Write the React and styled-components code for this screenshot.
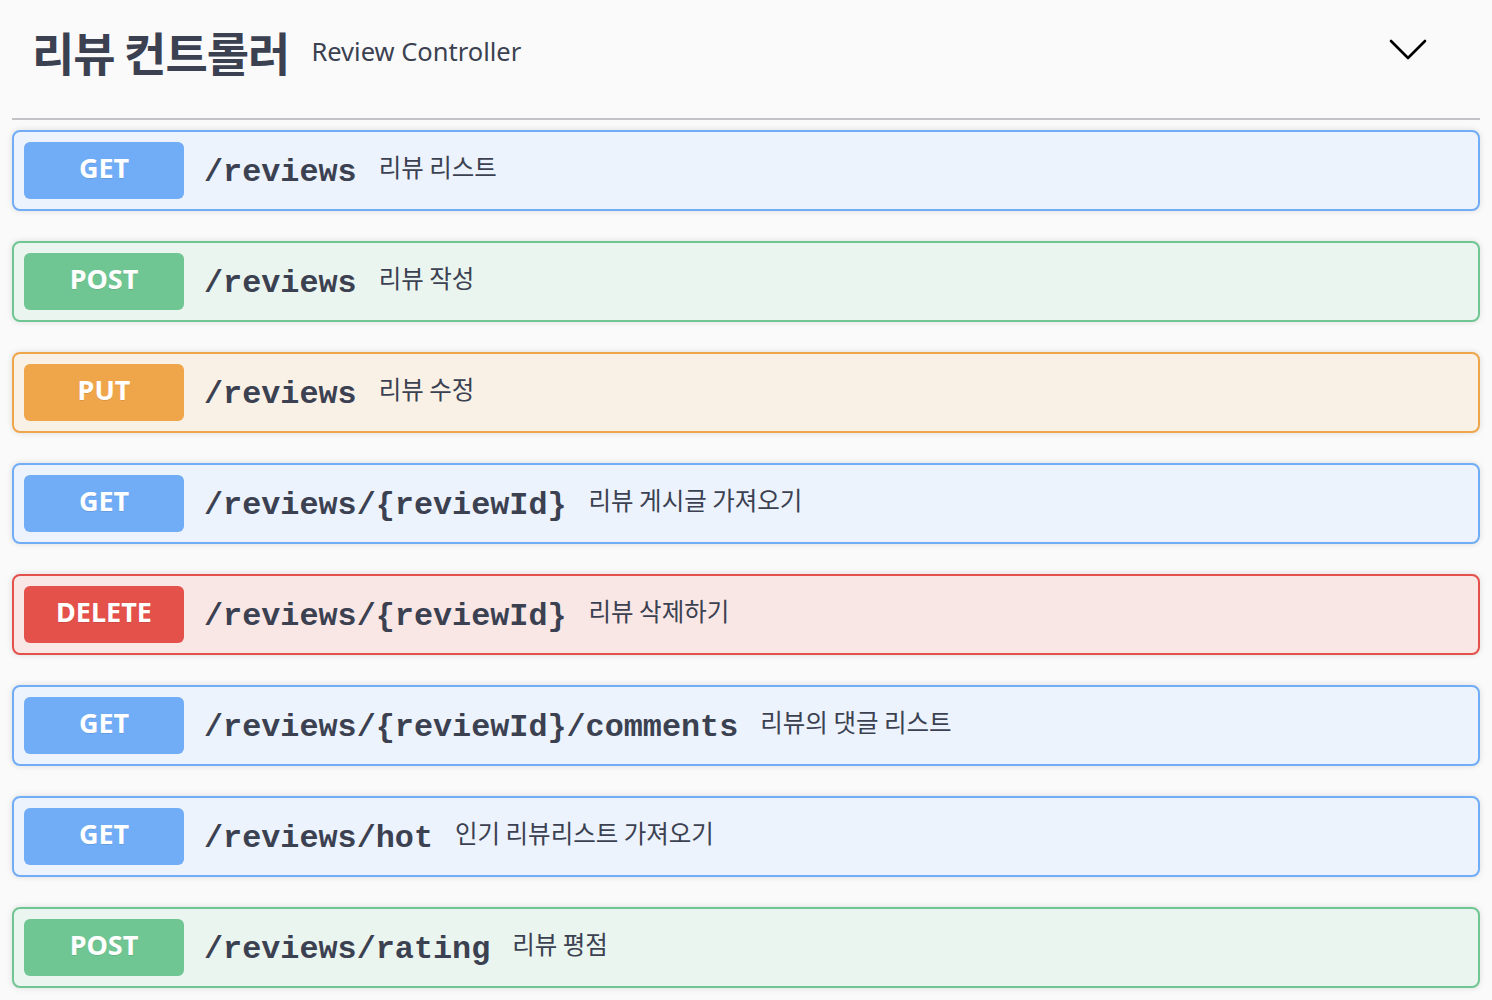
import React from 'react'
import styled, { createGlobalStyle } from 'styled-components'

const METHODS = {
    GET: { main: '#70adf6', bg: '#ecf3fc' },
    POST: { main: '#6fc692', bg: '#ebf5ef' },
    PUT: { main: '#efa54a', bg: '#faf1e6' },
    DELETE: { main: '#e4504a', bg: '#f9e7e6' },
}

const ROUTES = [
    { method: 'GET', path: '/reviews', desc: '리뷰 리스트' },
    { method: 'POST', path: '/reviews', desc: '리뷰 작성' },
    { method: 'PUT', path: '/reviews', desc: '리뷰 수정' },
    { method: 'GET', path: '/reviews/{reviewId}', desc: '리뷰 게시글 가져오기' },
    { method: 'DELETE', path: '/reviews/{reviewId}', desc: '리뷰 삭제하기' },
    { method: 'GET', path: '/reviews/{reviewId}/comments', desc: '리뷰의 댓글 리스트' },
    { method: 'GET', path: '/reviews/hot', desc: '인기 리뷰리스트 가져오기' },
    { method: 'POST', path: '/reviews/rating', desc: '리뷰 평점' },
]

const Chevron = () => (
    <svg width="38" height="21" viewBox="0 0 38 21" fill="none">
        <polyline points="2,2 19,19 36,2" stroke="#000" strokeWidth="2.6" strokeLinecap="round" strokeLinejoin="round" />
    </svg>
)

const App = () => {
    return (
        <>
            <GlobalStyle />
            <Page>
                <TagHeader>
                    <Title>리뷰 컨트롤러</Title>
                    <Subtitle>Review Controller</Subtitle>
                    <ExpandButton aria-label="collapse">
                        <Chevron />
                    </ExpandButton>
                </TagHeader>
                {ROUTES.map((r, i) => (
                    <Operation key={i} $method={r.method}>
                        <Badge $method={r.method}>{r.method}</Badge>
                        <Path>{r.path}</Path>
                        <Desc>{r.desc}</Desc>
                    </Operation>
                ))}
            </Page>
        </>
    )
}
export default App

const GlobalStyle = createGlobalStyle`
    html, body{
        margin:0;
        padding:0;
        background:#fafafa;
    }
    *{
        box-sizing:border-box;
    }
`

const Page = styled.div`
    padding:0 12px;
    font-family: "Noto Sans", "Noto Sans CJK KR", sans-serif;
    color:#3b4151;
`

const TagHeader = styled.div`
    display:flex;
    align-items:center;
    height:120px;
    padding:0 53px 16px 20px;
    border-bottom:2px solid #c1c3c7;
    margin-bottom:10px;
`

const Title = styled.h3`
    margin:0;
    font-family: "Noto Sans CJK KR", sans-serif;
    font-size:46px;
    font-weight:700;
    letter-spacing:-1px;
    color:#3b4151;
`

const Subtitle = styled.small`
    margin-left:22px;
    font-size:25.5px;
    font-family: "Noto Sans", sans-serif;
    color:#3b4151;
    flex:1;
`

const ExpandButton = styled.button`
    border:none;
    background:none;
    padding:0;
    display:flex;
    align-items:center;
    margin-top:-4px;
`

const Operation = styled.div`
    display:flex;
    align-items:center;
    height:81px;
    padding:0 10px;
    margin-bottom:30px;
    border:2px solid ${p => METHODS[p.$method].main};
    background:${p => METHODS[p.$method].bg};
    border-radius:8px;
    box-shadow:0 0 6px rgba(0,0,0,.12);
`

const Badge = styled.span`
    display:flex;
    align-items:center;
    justify-content:center;
    width:160px;
    height:57px;
    padding-bottom:6px;
    border-radius:6px;
    background:${p => METHODS[p.$method].main};
    color:#fff;
    font-family: "Noto Sans", sans-serif;
    font-size:27px;
    font-weight:700;
    text-shadow:0 1px 0 rgba(0,0,0,.1);
`

const Path = styled.span`
    padding:4px 22px 0 20px;
    font-family: "Liberation Mono", monospace;
    font-size:31.8px;
    font-weight:700;
    color:#3b4151;
`

const Desc = styled.span`
    font-family: "Noto Sans CJK KR", sans-serif;
    font-size:24.5px;
    color:#3b4151;
    margin-top:-9px;
`
